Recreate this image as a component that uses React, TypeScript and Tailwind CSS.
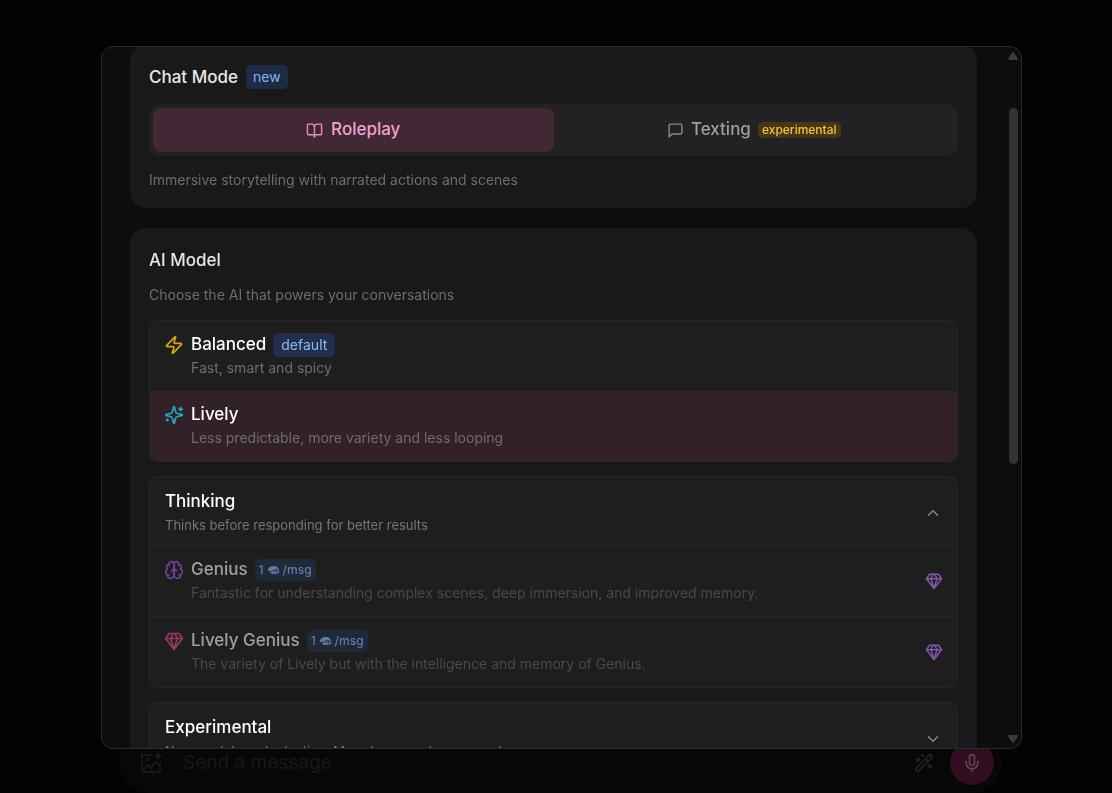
import React from 'react';
import { BookOpen, ChevronDown, ChevronUp, Mic, WandSparkles, Zap } from 'lucide-react';

interface Model {
  id: string;
  name: string;
  description: string;
  icon: React.ReactNode;
  badge?: string;
  selected?: boolean;
}

interface IconProps {
  size: number;
  className?: string;
  paths: string[];
}

const GEM = ['M6 3h12l4 6-10 13L2 9Z', 'M11 3 8 9l4 13 4-13-3-6', 'M2 9h20'];

const MESSAGE = ['M21 15a2 2 0 0 1-2 2H7l-4 4V5a2 2 0 0 1 2-2h14a2 2 0 0 1 2 2z'];

const SPARKLES = [
  'M9.937 15.5A2 2 0 0 0 8.5 14.063l-6.135-1.582a.5.5 0 0 1 0-.962L8.5 9.936A2 2 0 0 0 9.937 8.5l1.582-6.135a.5.5 0 0 1 .963 0L14.063 8.5A2 2 0 0 0 15.5 9.937l6.135 1.581a.5.5 0 0 1 0 .964L15.5 14.063a2 2 0 0 0-1.437 1.437l-1.582 6.135a.5.5 0 0 1-.963 0z',
  'M20 3v4',
  'M22 5h-4',
  'M4 17v2',
  'M5 18H3',
];

const BRAIN = [
  'M12 5a3 3 0 1 0-5.997.125 4 4 0 0 0-2.526 5.77 4 4 0 0 0 .556 6.588A4 4 0 1 0 12 18Z',
  'M12 5a3 3 0 1 1 5.997.125 4 4 0 0 1 2.526 5.77 4 4 0 0 1-.556 6.588A4 4 0 1 1 12 18Z',
  'M15 13a4.5 4.5 0 0 1-3-4 4.5 4.5 0 0 1-3 4',
  'M17.599 6.5a3 3 0 0 0 .399-1.375',
  'M6.003 5.125A3 3 0 0 0 6.401 6.5',
  'M3.477 10.896a4 4 0 0 1 .585-.396',
  'M19.938 10.5a4 4 0 0 1 .585.396',
  'M6 18a4 4 0 0 1-1.967-.516',
  'M19.967 17.484A4 4 0 0 1 18 18',
];

const StrokeIcon: React.FC<IconProps> = ({ size, className, paths }) => (
  <svg
    width={size}
    height={size}
    viewBox="0 0 24 24"
    fill="none"
    stroke="currentColor"
    strokeWidth="2"
    strokeLinecap="round"
    strokeLinejoin="round"
    aria-hidden="true"
    className={className}
  >
    {paths.map((d) => (
      <path key={d} d={d} />
    ))}
  </svg>
);

const ShellIcon: React.FC = () => (
  <svg width="13" height="10" viewBox="0 0 26 20" aria-hidden="true">
    <path d="M1 10C3 5 8 1 14 2c6 0 10 4 11 10-3-3-6-4-10-3-3 1-6 4-10 3-2 0-3-1-4-2Z" fill="currentColor" />
    <path d="M5 14c4 1 7-3 11-3 4-1 8 1 9 4-3 3-7 3-11 3-4 0-7-1-9-4Z" fill="currentColor" />
    <path d="m14 11 2 6M19 10l1 7" stroke="#1f2938" strokeWidth="1.5" />
  </svg>
);

const ImageSparkleIcon: React.FC = () => (
  <svg width="24" height="24" viewBox="0 0 24 24" fill="none" stroke="currentColor" strokeWidth="2" aria-hidden="true">
    <path d="M13 4H3v17h18V11" />
    <path d="m3 20 6-6 3 3 5-6 4 5" />
    <circle cx="8" cy="9" r="2" fill="currentColor" stroke="none" />
    <path d="m19 0 1.5 3.5L24 5l-3.500 1.500L19 10l-1.500-3.500L14 5l3.500-1.500Z" fill="currentColor" stroke="none" />
  </svg>
);

const BASE_MODELS: Model[] = [
  {
    id: 'balanced',
    name: 'Balanced',
    description: 'Fast, smart and spicy',
    icon: <Zap size={20} className="text-[#d9a514]" />,
    badge: 'default',
  },
  {
    id: 'lively',
    name: 'Lively',
    description: 'Less predictable, more variety and less looping',
    icon: <StrokeIcon size={20} paths={SPARKLES} className="text-[#1fa9c4]" />,
    selected: true,
  },
];

const THINKING_MODELS: Model[] = [
  {
    id: 'genius',
    name: 'Genius',
    description: 'Fantastic for understanding complex scenes, deep immersion, and improved memory.',
    icon: <StrokeIcon size={20} paths={BRAIN} className="text-[#6f3f9c]" />,
  },
  {
    id: 'lively-genius',
    name: 'Lively Genius',
    description: 'The variety of Lively but with the intelligence and memory of Genius.',
    icon: <StrokeIcon size={20} paths={GEM} className="text-[#95386a]" />,
  },
];

const BaseModelRow: React.FC<{ model: Model }> = ({ model }) => (
  <button
    type="button"
    aria-pressed={!!model.selected}
    className={`flex w-full gap-[7px] px-3.5 py-3 text-left ${model.selected ? 'bg-[#33212a]' : 'bg-[#1e1e1e]'}`}
  >
    <span className="flex h-6 items-center">{model.icon}</span>
    <span className="flex flex-col">
      <span className="flex h-6 items-center gap-[7px] text-[17px] font-medium text-white">
        {model.name}
        {model.badge && (
          <span className="flex h-6 items-center rounded-[5px] bg-[#222e4b] px-2 text-sm font-normal text-[#8ebcf5]">
            {model.badge}
          </span>
        )}
      </span>
      <span className="text-sm leading-[22px] text-[#6c6c73]">{model.description}</span>
    </span>
  </button>
);

const ThinkingModelRow: React.FC<{ model: Model }> = ({ model }) => (
  <button type="button" className="flex w-full items-center gap-[7px] border-t border-[#262627] px-3.5 py-3 text-left">
    <span className="flex h-6 items-center self-start">{model.icon}</span>
    <span className="flex flex-1 flex-col">
      <span className="flex h-6 items-center gap-[7px] text-[17px] font-medium text-[#a0a0a0]">
        {model.name}
        <span className="flex h-[22px] items-center gap-[3px] rounded-[5px] bg-[#1f2938] px-1 text-xs text-[#5f7da6]">
          1<ShellIcon />/msg
        </span>
      </span>
      <span className="text-sm leading-[22px] text-[#49494c]">{model.description}</span>
    </span>
    <StrokeIcon size={18} paths={GEM} className="text-[#8257a8]" />
  </button>
);

const ChatModeCard: React.FC = () => (
  <section className="rounded-2xl bg-[#191919] px-[19px] pt-5 pb-4">
    <div className="flex items-center gap-2">
      <h2 className="text-[17px] leading-6 font-medium text-[#e8e8ea]">Chat Mode</h2>
      <span className="flex h-6 items-center rounded-[5px] bg-[#1e2b45] px-[7px] text-sm text-[#82b4f2]">new</span>
    </div>
    <div className="mt-[15px] grid grid-cols-2 rounded-xl bg-[#222224] p-1">
      <button
        type="button"
        className="flex h-11 items-center justify-center gap-2 rounded-lg bg-[#412834] text-[17px] font-medium text-[#f0a2d0]"
      >
        <BookOpen size={17} className="text-[#d98fbc]" />
        Roleplay
      </button>
      <button type="button" className="flex h-11 items-center justify-center gap-[7px] text-[17px] font-medium text-[#9c9ca5]">
        <StrokeIcon size={17} paths={MESSAGE} className="text-[#85858c]" />
        Texting
        <span className="rounded-[5px] bg-[#47361a] px-1 text-xs leading-4 text-[#f0c23c]">experimental</span>
      </button>
    </div>
    <p className="mt-3 text-sm leading-6 text-[#6c6c73]">Immersive storytelling with narrated actions and scenes</p>
  </section>
);

const AiModelCard: React.FC = () => (
  <section className="rounded-2xl bg-[#191919] px-[19px] py-5">
    <h2 className="text-[17px] leading-6 font-medium text-[#e8e8ea]">AI Model</h2>
    <p className="mt-[11px] text-sm leading-6 text-[#6c6c73]">Choose the AI that powers your conversations</p>

    <div className="mt-[13px] overflow-hidden rounded-lg border border-[#262627]">
      {BASE_MODELS.map((model) => (
        <BaseModelRow key={model.id} model={model} />
      ))}
    </div>

    <div className="mt-3.5 overflow-hidden rounded-lg border border-[#262627] bg-[#1e1e1e]">
      <button type="button" aria-expanded="true" className="flex w-full items-center justify-between px-[15px] pt-3 pb-2 text-left">
        <span className="flex flex-col">
          <span className="text-[17px] leading-6 font-medium text-white">Thinking</span>
          <span className="text-[13px] leading-6 text-[#75757c]">Thinks before responding for better results</span>
        </span>
        <ChevronUp size={18} className="text-[#85858c]" />
      </button>
      {THINKING_MODELS.map((model) => (
        <ThinkingModelRow key={model.id} model={model} />
      ))}
    </div>

    <div className="mt-3.5 overflow-hidden rounded-lg border border-[#262627] bg-[#1e1e1e]">
      <button type="button" aria-expanded="false" className="flex w-full items-center justify-between px-[15px] pt-3 pb-2 text-left">
        <span className="flex flex-col">
          <span className="text-[17px] leading-6 font-medium text-white">Experimental</span>
          <span className="text-[13px] leading-6 text-[#75757c]">New models under testing. May change or be removed.</span>
        </span>
        <ChevronDown size={18} className="text-[#85858c]" />
      </button>
    </div>
  </section>
);

const ScrollRail: React.FC = () => (
  <div className="flex w-4 shrink-0 flex-col items-center py-1" aria-hidden="true">
    <svg width="12" height="10" viewBox="0 0 12 10">
      <path d="M5 1.500Q6 0 7 1.500L10.500 7Q11.500 9 10 9H2Q.5 9 1.500 7Z" fill="#3a3a3a" />
    </svg>
    <div className="flex w-full flex-1 flex-col items-center">
      <div className="grow-[47]" />
      <div className="w-[9px] grow-[356] rounded-full bg-[#333333]" />
      <div className="grow-[270]" />
    </div>
    <svg width="12" height="10" viewBox="0 0 12 10">
      <path d="M5 8.500Q6 10 7 8.500L10.500 3Q11.500 1 10 1H2Q.5 1 1.500 3Z" fill="#3a3a3a" />
    </svg>
  </div>
);

const Composer: React.FC = () => (
  <form className="flex h-[60px] w-full items-center rounded-full bg-[#070707] px-2 pl-5">
    <button type="button" aria-label="Add image" className="text-[#171717]">
      <ImageSparkleIcon />
    </button>
    <input
      type="text"
      aria-label="Message"
      placeholder="Send a message"
      className="ml-5 min-w-0 flex-1 bg-transparent text-[19px] text-[#171717] outline-none placeholder:text-[#171717]"
    />
    <button type="button" aria-label="Suggest a reply" className="mr-4 text-[#242424]">
      <WandSparkles size={20} />
    </button>
    <button type="button" aria-label="Record" className="flex size-11 items-center justify-center rounded-full bg-[#320d22] text-[#5a4550]">
      <Mic size={20} />
    </button>
  </form>
);

const App: React.FC = () => {
  return (
    <div className="flex h-screen flex-col justify-end overflow-hidden bg-[#020202] font-['Inter',sans-serif]">
      <main className="pr-[110px] pl-[119px]">
        <Composer />
      </main>

      <div className="fixed inset-0 flex pt-[46px] pr-[90px] pb-11 pl-[101px]">
        <div
          role="dialog"
          aria-label="Chat settings"
          className="flex min-w-0 flex-1 overflow-hidden rounded-xl border border-[#2a2a2a] bg-[#0d0d0d]"
        >
          <div className="min-w-0 flex-1 overflow-hidden px-7">
            <div className="-mt-0.5 flex flex-col gap-5">
              <ChatModeCard />
              <AiModelCard />
            </div>
          </div>
          <ScrollRail />
        </div>
      </div>
    </div>
  );
};

export default App;
